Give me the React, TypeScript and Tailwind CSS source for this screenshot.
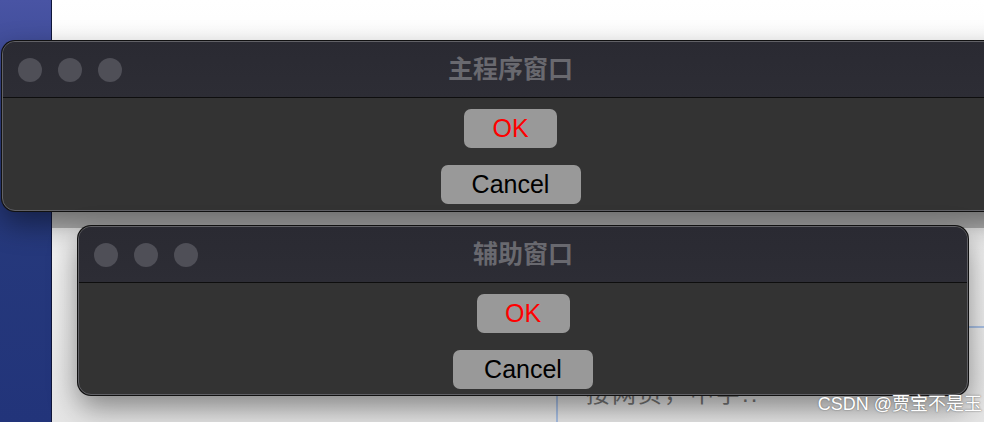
const lights = [0, 1, 2];

function TrafficLights() {
  return (
    <div className="flex gap-4 pl-[15px]">
      {lights.map((i) => (
        <span key={i} className="h-6 w-6 rounded-full bg-[#4f4f57]" />
      ))}
    </div>
  );
}

function DemoWindow({ title, className }: { title: string; className: string }) {
  return (
    <div
      className={`absolute flex flex-col overflow-hidden rounded-[13px] border border-[#616166] bg-[#333333] shadow-[0_0_0_1px_#111,0_12px_30px_rgba(0,0,0,0.45)] ${className}`}
    >
      <div className="relative flex h-[56px] items-center border-b border-[#0e0e0e] bg-gradient-to-b from-[#2a2a32] to-[#2d2d35]">
        <TrafficLights />
        <div className="absolute inset-0 flex items-center justify-center text-[25px] font-bold text-[#69696f]">
          {title}
        </div>
      </div>
      <div className="flex flex-1 flex-col items-center gap-[17px] pt-[11px]">
        <button className="h-[39px] w-[93px] rounded-[7px] bg-[#999999] text-[25px] leading-none text-[#ff0000]">
          OK
        </button>
        <button className="h-[39px] w-[140px] rounded-[7px] bg-[#999999] text-[25px] leading-none text-black">
          Cancel
        </button>
      </div>
    </div>
  );
}

export default function App() {
  return (
    <div
      className="relative h-[422px] w-[984px] overflow-hidden bg-gradient-to-b from-white via-[#f4f4f4] to-[#e6e6e6]"
      style={{ fontFamily: '"Helvetica Neue", "Liberation Sans", Arial, "Noto Sans CJK SC", sans-serif' }}
    >
      {/* desktop backdrop */}
      <div className="absolute left-0 top-0 h-full w-[52px] border-r border-[#10163a] bg-gradient-to-b from-[#4954a4] via-[#26397c] to-[#22347a]" />
      <div className="absolute left-[52px] top-[212px] h-[16px] w-[932px] bg-[#b7b7b7]" />
      <div className="absolute left-[556px] top-[327px] h-[95px] w-[2px] bg-[#a9c0e4]" />
      <div className="absolute left-[556px] top-[326px] h-[2px] w-[428px] bg-[#a9c0e4]" />
      <div className="absolute left-[586px] top-[376px] text-[24px] tracking-[2px] text-[#777]">
        接网页，中字..
      </div>

      <DemoWindow title="主程序窗口" className="left-[2px] top-[41px] h-[170px] w-[1017px]" />
      <DemoWindow title="辅助窗口" className="left-[78px] top-[226px] h-[169px] w-[890px]" />

      <div className="absolute right-[2px] top-[391px] text-[18px] text-white [text-shadow:0_0_2px_#777,0_0_1px_#777]">
        CSDN @贾宝不是玉
      </div>
    </div>
  );
}
